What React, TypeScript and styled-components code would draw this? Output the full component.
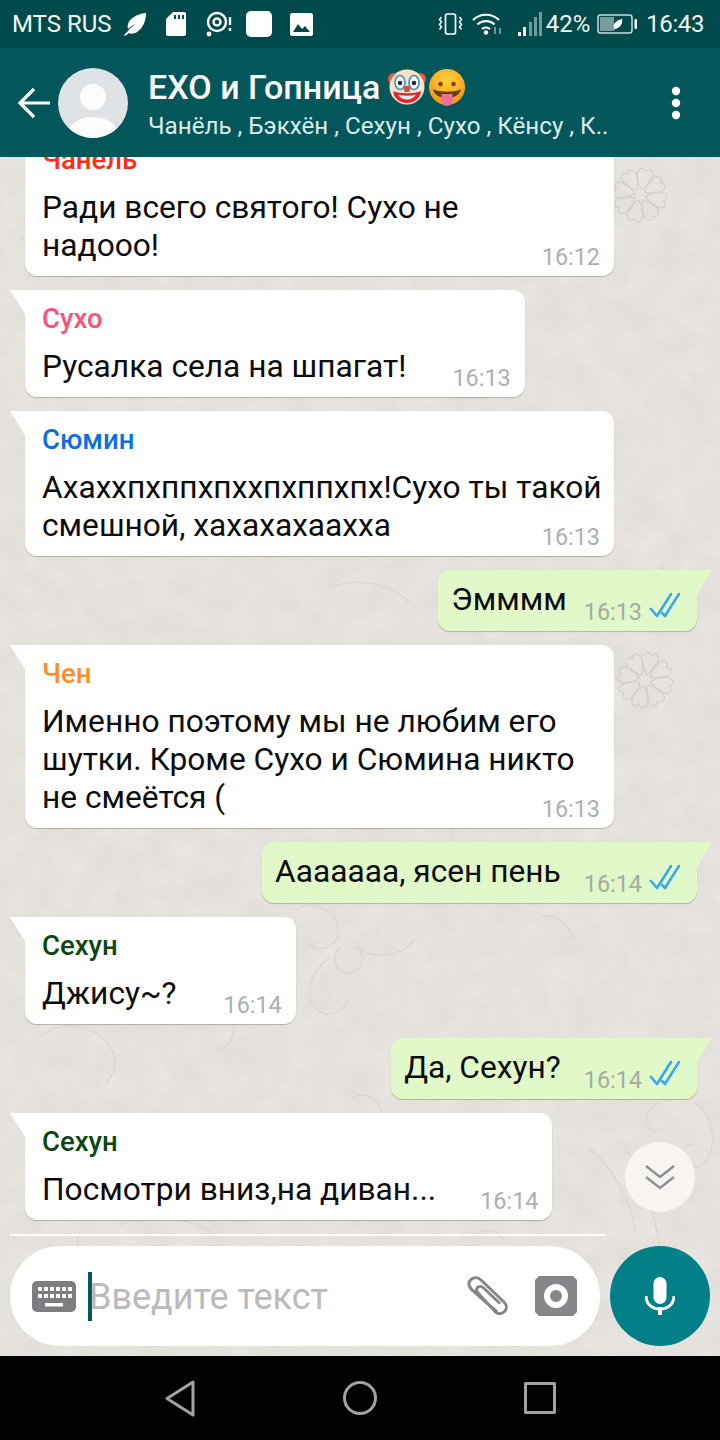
import React from "react";
import styled, { createGlobalStyle } from "styled-components";

const Global = createGlobalStyle`
  html, body { margin: 0; padding: 0; background: #000; }
  #root { width: 720px; height: 1440px; }
`;

const Phone = styled.div`
  width: 720px;
  height: 1440px;
  display: flex;
  flex-direction: column;
  overflow: hidden;
  font-family: Roboto, "Noto Sans", sans-serif;
`;

const StatusBar = styled.div`
  height: 48px;
  flex: none;
  background: #004a4c;
  color: #f2f7f7;
  display: flex;
  align-items: center;
  justify-content: space-between;
  padding: 0 16px 0 12px;
`;

const StatusGroup = styled.div`
  display: flex;
  align-items: center;
`;

const StatusText = styled.span<{ $ml?: number; $tight?: boolean }>`
  font-size: 24px;
  line-height: 48px;
  margin-left: ${(p) => p.$ml ?? 0}px;
  letter-spacing: ${(p) => (p.$tight ? "-0.4px" : "0")};
`;

const StatusIcon = styled.svg<{ $ml: number }>`
  flex: none;
  display: block;
  margin-left: ${(p) => p.$ml}px;
`;

const Header = styled.header`
  height: 109px;
  flex: none;
  background: #03565a;
  display: flex;
  align-items: center;
  padding: 0 0 0 18px;
  position: relative;
  z-index: 2;
  color: #fff;
`;

const BackIcon = styled.svg`
  flex: none;
  display: block;
`;

const Avatar = styled.svg`
  flex: none;
  display: block;
  margin-left: 8px;
`;

const HeaderText = styled.div`
  margin-left: 21px;
  width: 490px;
  flex: none;
  display: flex;
  flex-direction: column;
  padding-top: 5px;
`;

const TitleRow = styled.div`
  display: flex;
  align-items: center;
  height: 40px;
`;

const Title = styled.span`
  font-size: 34px;
  font-weight: 500;
  line-height: 40px;
  margin-left: -1px;
`;

const Emoji = styled.svg<{ $ml: number }>`
  flex: none;
  display: block;
  margin-left: ${(p) => p.$ml}px;
`;

const Subtitle = styled.div`
  font-size: 24.2px;
  line-height: 34px;
  margin-top: 2px;
  color: #dcebeb;
  white-space: nowrap;
  margin-left: -1px;
`;

const MenuDots = styled.svg`
  flex: none;
  display: block;
  margin-left: 32px;
`;

const Chat = styled.main`
  flex: 1;
  min-height: 0;
  position: relative;
  background: #e3dfdb;
  display: flex;
  flex-direction: column;
  overflow: hidden;
`;

const Wallpaper = styled.svg`
  position: absolute;
  inset: 0;
  display: block;
`;

const Messages = styled.div`
  position: relative;
  flex: 1;
  min-height: 0;
  display: flex;
  flex-direction: column;
  justify-content: flex-end;
  gap: 14px;
  padding: 0 23px 14px 25px;
`;

const Bubble = styled.div<{ $out?: boolean; $tail?: boolean; $wide?: boolean }>`
  flex: none;
  position: relative;
  display: flow-root;
  box-sizing: border-box;
  max-width: 589px;
  ${(p) => p.$wide && "width: 589px;"}
  align-self: ${(p) => (p.$out ? "flex-end" : "flex-start")};
  background: ${(p) => (p.$out ? "#e1f8c8" : "#fff")};
  color: #0c0c0c;
  border-radius: 12px;
  ${(p) => p.$tail && (p.$out ? "border-top-right-radius: 0;" : "border-top-left-radius: 0;")}
  padding: ${(p) => (p.$out ? "11px 17px 12px 13px" : "11px 10px 11px 17px")};
  box-shadow: 0 1px 1px rgba(90, 80, 70, 0.35);
  ${(p) =>
    p.$tail &&
    (p.$out
      ? `&::before { content: ""; position: absolute; top: 0; right: -15px; width: 15px; height: 25px; background: #e1f8c8; clip-path: polygon(0 0, 100% 0, 0 100%); }`
      : `&::before { content: ""; position: absolute; top: 0; left: -15px; width: 15px; height: 24px; background: #fff; clip-path: polygon(0 0, 100% 0, 100% 100%); }`)}
`;

const Sender = styled.div<{ $color: string }>`
  font-size: 27.5px;
  font-weight: 500;
  line-height: 36px;
  margin-bottom: 11px;
  color: ${(p) => p.$color};
`;

const Body = styled.span`
  font-size: 31.7px;
  line-height: 38px;
  white-space: pre-line;
`;

const Meta = styled.span<{ $gap: number; $out?: boolean }>`
  float: right;
  display: flex;
  align-items: flex-start;
  gap: 7px;
  margin: ${(p) => (p.$out ? 19 : 18)}px ${(p) => (p.$out ? 0 : 4)}px -20px ${(p) => p.$gap}px;
  height: 24px;
`;

const Time = styled.span<{ $out?: boolean }>`
  font-size: 23.4px;
  line-height: 24px;
  color: ${(p) => (p.$out ? "#a3aca0" : "#abafb2")};
`;

const Ticks = styled.svg`
  display: block;
  flex: none;
  margin-top: -8px;
`;

const ScrollDown = styled.div`
  position: absolute;
  right: 25px;
  bottom: 144px;
  width: 70px;
  height: 70px;
  border-radius: 50%;
  background: #f8f4f2;
  display: flex;
  align-items: center;
  justify-content: center;
`;

const Divider = styled.div`
  position: relative;
  height: 2px;
  width: 597px;
  margin: 0 0 10px 10px;
  background: #fff;
  flex: none;
`;

const Composer = styled.div`
  position: relative;
  flex: none;
  display: flex;
  gap: 10px;
  padding: 0 10px 10px;
`;

const InputPill = styled.div`
  width: 590px;
  height: 100px;
  box-sizing: border-box;
  background: #fff;
  border-radius: 50px;
  display: flex;
  align-items: center;
  padding: 0 23px 0 22px;
`;

const Caret = styled.div`
  width: 4px;
  height: 49px;
  background: #03565a;
  margin-left: 12px;
  flex: none;
`;

const Placeholder = styled.span`
  font-size: 36px;
  color: #bbbbbb;
  margin-left: -3px;
  flex: 1;
  line-height: 48px;
  padding-top: 2px;
`;

const PillIcon = styled.svg<{ $ml?: number }>`
  flex: none;
  display: block;
  margin-left: ${(p) => p.$ml ?? 0}px;
`;

const MicButton = styled.div`
  width: 100px;
  height: 100px;
  border-radius: 50%;
  background: #027f87;
  display: flex;
  align-items: center;
  justify-content: center;
`;

const NavRow = styled.nav`
  display: flex;
  width: 720px;
  height: 84px;
  align-items: center;
  justify-content: center;
  gap: 147px;
  background: #000;
  flex: none;
`;

type Msg = {
  name?: string;
  color?: string;
  text: string;
  time: string;
  out?: boolean;
  tail?: boolean;
  gap?: number;
  wide?: boolean;
};

const messages: Msg[] = [
  { name: "Чанёль", color: "#ff2a18", text: "Ради всего святого! Сухо не\nнадооо!", time: "16:12", wide: true },
  { name: "Сухо", color: "#f9527c", text: "Русалка села на шпагат!", time: "16:13", tail: true, gap: 46 },
  { name: "Сюмин", color: "#0a6fe4", text: "Ахаххпхппхпххпхппхпх!Сухо ты такой смешной, хахахахаахха", time: "16:13", tail: true, wide: true },
  { text: "Эмммм", time: "16:13", out: true, tail: true, gap: 17 },
  { name: "Чен", color: "#fd8f26", text: "Именно поэтому мы не любим его шутки. Кроме Сухо и Сюмина никто не смеётся (", time: "16:13", tail: true, wide: true },
  { text: "Ааааааа, ясен пень", time: "16:14", out: true, tail: true, gap: 23 },
  { name: "Сехун", color: "#0c4712", text: "Джису~?", time: "16:14", tail: true },
  { text: "Да, Сехун?", time: "16:14", out: true, tail: true, gap: 23 },
  { name: "Сехун", color: "#0c4712", text: "Посмотри вниз,на диван...", time: "16:14", tail: true, gap: 44 },
];

const Flower = ({ x, y, r }: { x: number; y: number; r: number }) => (
  <g transform={`translate(${x} ${y}) scale(${r / 30}) rotate(14)`} fill="none" stroke="#d3cec9" strokeWidth="1.2">
    {[0, 45, 90, 135, 180, 225, 270, 315].map((a) => (
      <path key={a} transform={`rotate(${a})`} d="M0-6C-4-10-10-18-8-25-6-30-2-29 0-26 2-29 6-30 8-25 10-18 4-10 0-6Z" />
    ))}
  </g>
);

const WallpaperArt = () => (
  <Wallpaper width="720" height="1199" viewBox="0 0 720 1199">
    <defs>
      <filter id="mottle" x="0" y="0" width="100%" height="100%">
        <feTurbulence type="fractalNoise" baseFrequency="0.035" numOctaves="4" seed="7" />
        <feColorMatrix values="0 0 0 0 0.97  0 0 0 0 0.96  0 0 0 0 0.94  1.2 0 0 0 -0.4" />
      </filter>
    </defs>
    <rect width="720" height="1199" filter="url(#mottle)" opacity="0.4" />
    <Flower x={645} y={523} r={29} />
    <Flower x={640} y={38} r={28} />
    <g fill="none" stroke="#d8d4cf" strokeWidth="1.1">
      <path d="M622 985c18 28 30 60 36 96 5 24 2 40-6 46M590 992c22 18 40 48 46 84M694 945c14 8 20 26 18 44 -2 16-12 24-22 20-12-6-8-24 4-22" />
      <path d="M660 945c-8 4-14 10-14 18 0 10 10 14 16 8" />
      <path d="M330 800c-16 12-24 30-18 46 8 16 28 14 36-2M355 790c20 14 50 8 60-8M180 860c18-22 42-20 52 0 6 14-2 30-16 34" />
      <path d="M40 880c16-14 44-16 64 2 14 14 14 32 2 44M300 1060c12-12 36-12 46 2M120 1068c24-12 60-10 90 6" />
      <path d="M300 750c22-6 40 8 38 26-2 14-18 20-28 12M470 640c-16 14-24 36-14 54M540 760c16-4 28 6 34 22" />
      <path d="M20 80c14 8 18 28 6 44M660 410c18 18 30 40 30 62M330 430c30-10 60-4 80 16M400 560c16 14 40 14 56 2" />
      <path d="M340 790c-10 10-4 26 8 26s18-12 12-22M352 940c14-6 28 2 30 16M80 1075c-6 8-2 18 6 20M480 1075c10-4 20 0 24 8" />
    </g>
  </Wallpaper>
);

const DoubleTick = () => (
  <Ticks width="31" height="26" viewBox="0 0 31 26" fill="none" stroke="#35a9ec" strokeWidth="2.6" strokeLinecap="round" strokeLinejoin="round">
    <path d="M2 17l6 7L22 2" />
    <path d="M13 21l3 3L30 2" />
  </Ticks>
);

const ClownEmoji = () => (
  <Emoji $ml={8} width="38" height="36" viewBox="0 0 38 36">
    <circle cx="6" cy="10" r="6" fill="#ee5a3c" />
    <circle cx="32" cy="10" r="6" fill="#ee5a3c" />
    <circle cx="19" cy="18" r="17.500" fill="#f9e2c8" />
    <ellipse cx="12" cy="13.500" rx="5" ry="7" fill="#fff" stroke="#3f8fd0" strokeWidth="1.700" />
    <ellipse cx="26" cy="13.500" rx="5" ry="7" fill="#fff" stroke="#3f8fd0" strokeWidth="1.700" />
    <circle cx="12" cy="14" r="2.300" fill="#2c2c2c" />
    <circle cx="26" cy="14" r="2.300" fill="#2c2c2c" />
    <path d="M5 22c5 3 23 3 28 0-1 8-7 12-14 12S6 30 5 22z" fill="#e4262b" />
    <path d="M10 25.500c4 1.500 14 1.500 18 0-2 3.500-5 5-9 5s-7-1.500-9-5z" fill="#fdf2e8" />
    <circle cx="19" cy="20" r="3.200" fill="#e8482f" />
  </Emoji>
);

const TongueEmoji = () => (
  <Emoji $ml={3} width="36" height="37" viewBox="0 0 36 37">
    <defs>
      <radialGradient id="face" cx="50%" cy="30%" r="70%">
        <stop offset="0%" stopColor="#ffd23f" />
        <stop offset="100%" stopColor="#f39414" />
      </radialGradient>
    </defs>
    <circle cx="18" cy="18" r="18" fill="url(#face)" />
    <circle cx="11.500" cy="15" r="2.300" fill="#7a4510" />
    <circle cx="24.500" cy="15" r="2.300" fill="#7a4510" />
    <path d="M4 20c4 3.500 24 3.500 28 0-1 6-7 9-14 9s-13-3-14-9z" fill="#6b3a10" />
    <path d="M12.500 25h11v7a5.500 5 0 0 1-11 0z" fill="#ec6f9a" />
  </Emoji>
);

export default function App() {
  return (
    <Phone>
      <Global />
      <StatusBar>
        <StatusGroup>
          <StatusText>MTS RUS</StatusText>
          <StatusIcon $ml={11} width="24" height="26" viewBox="0 0 24 26" fill="#fff">
            <path d="M23 2c0 8-3 15-9 19-3 2-6 2-8 1l-4 3-1-1 4-4c2-3 5-5 8-7-3 1-6 3-8 5C3 9 13 3 23 2z" />
          </StatusIcon>
          <StatusIcon $ml={18} width="22" height="26" viewBox="0 0 22 26" fill="#fff">
            <path d="M8 1h11a2 2 0 0 1 2 2v20a2 2 0 0 1-2 2H3a2 2 0 0 1-2-2V8z" />
            <path d="M9 4h2v4H9zM13 4h2v4h-2zM17 4h2v4h-2z" fill="#004a4c" />
          </StatusIcon>
          <StatusIcon $ml={19} width="26" height="26" viewBox="0 0 26 26" fill="none" stroke="#fff">
            <circle cx="11" cy="11" r="9" strokeWidth="2.400" />
            <circle cx="11" cy="11" r="3.500" strokeWidth="2.400" />
            <circle cx="3" cy="23" r="2.400" fill="#fff" stroke="none" />
            <path d="M24 6v8M24 17v3" strokeWidth="2.400" />
          </StatusIcon>
          <StatusIcon $ml={14} width="26" height="26" viewBox="0 0 26 26" fill="#fff">
            <rect width="26" height="26" rx="5" />
          </StatusIcon>
          <StatusIcon $ml={18} width="23" height="23" viewBox="0 0 23 23">
            <rect width="23" height="23" rx="2.500" fill="#fff" />
            <path d="M3 19l5-8 4 5 3-3 5 6z" fill="#004a4c" />
          </StatusIcon>
        </StatusGroup>
        <StatusGroup>
          <StatusIcon $ml={0} width="25" height="22" viewBox="0 0 25 22" fill="none" stroke="#fff" strokeWidth="1.700">
            <rect x="7.500" y="1" width="10" height="20" rx="2" />
            <path d="M3.500 4l-2 2.500 2 2.500-2 2.500 2 2.500-2 2.500M21.500 4l2 2.500-2 2.500 2 2.500-2 2.500 2 2.500" strokeWidth="1.500" />
          </StatusIcon>
          <StatusIcon $ml={9} width="30" height="22" viewBox="0 0 30 22" fill="none" stroke="#fff" strokeWidth="2.200">
            <path d="M1 7c7-7 19-7 26 0M5.500 11.500c4.500-4.500 12.500-4.500 17 0M10 16c2-2 6-2 8 0" />
            <circle cx="14" cy="19.500" r="2.200" fill="#fff" stroke="none" />
            <path d="M23 14v7M28 15v6" strokeWidth="1.300" stroke="#a9c4c4" />
          </StatusIcon>
          <StatusIcon $ml={16} width="24" height="24" viewBox="0 0 24 24">
            <rect x="0" y="20" width="3" height="4" fill="#fff" />
            <rect x="5" y="15" width="3" height="9" fill="#fff" />
            <rect x="11" y="10" width="3" height="14" fill="#6f9a9a" />
            <rect x="16" y="5" width="3" height="19" fill="#6f9a9a" />
            <rect x="21" y="0" width="3" height="24" fill="#6f9a9a" />
          </StatusIcon>
          <StatusText $ml={4}>42%</StatusText>
          <StatusIcon $ml={7} width="40" height="20" viewBox="0 0 40 20">
            <rect x="1" y="1" width="34" height="18" rx="2.500" fill="none" stroke="#c9dcdc" strokeWidth="1.500" />
            <rect x="3" y="3" width="14" height="14" fill="#7a9b9b" />
            <rect x="37.500" y="5" width="2.500" height="10" rx="1" fill="#fff" />
            <path d="M25 5c1 5-2 9-7 10l-1 1 0-2c-1-5 3-8 8-9z" fill="#fff" />
          </StatusIcon>
          <StatusText $ml={9} $tight>16:43</StatusText>
        </StatusGroup>
      </StatusBar>

      <Header>
        <BackIcon width="32" height="32" viewBox="0 0 32 32" fill="none" stroke="#fff" strokeWidth="3.200">
          <path d="M32 16H3M16 2L2 16l14 14" />
        </BackIcon>
        <Avatar width="70" height="70" viewBox="0 0 70 70">
          <defs>
            <clipPath id="avatarClip"><circle cx="35" cy="35" r="35" /></clipPath>
          </defs>
          <circle cx="35" cy="35" r="35" fill="#dfe3e6" />
          <g clipPath="url(#avatarClip)" fill="#fcfcfc">
            <circle cx="35" cy="29" r="13" />
            <ellipse cx="35" cy="66" rx="25" ry="17" />
          </g>
        </Avatar>
        <HeaderText>
          <TitleRow>
            <Title>EXO и Гопница</Title>
            <ClownEmoji />
            <TongueEmoji />
          </TitleRow>
          <Subtitle>Чанёль , Бэкхён , Сехун , Сухо , Кёнсу , К..</Subtitle>
        </HeaderText>
        <MenuDots width="10" height="34" viewBox="0 0 10 34" fill="#fff">
          <circle cx="5" cy="5" r="4.200" />
          <circle cx="5" cy="17" r="4.200" />
          <circle cx="5" cy="29" r="4.200" />
        </MenuDots>
      </Header>

      <Chat>
        <WallpaperArt />
        <Messages>
          {messages.map((m, i) => (
            <Bubble key={i} $out={m.out} $tail={m.tail} $wide={m.wide}>
              {m.name && <Sender $color={m.color!}>{m.name}</Sender>}
              <Body>{m.text}</Body>
              <Meta $gap={m.gap ?? 47} $out={m.out}>
                <Time $out={m.out}>{m.time}</Time>
                {m.out && <DoubleTick />}
              </Meta>
            </Bubble>
          ))}
        </Messages>
        <ScrollDown>
          <svg width="32" height="26" viewBox="0 0 32 26" fill="none" stroke="#8f8f8f" strokeWidth="2.400">
            <path d="M2 2l14 11L30 2M2 13l14 11 14-11" />
          </svg>
        </ScrollDown>
        <Divider />
        <Composer>
          <InputPill>
            <PillIcon width="44" height="31" viewBox="0 0 44 31">
              <rect width="44" height="31" rx="5" fill="#7d7d82" />
              <g fill="#fff">
                {[7, 13, 19, 25, 31, 37].map((x) => (
                  <rect key={x} x={x - 1} y="6" width="4" height="4" />
                ))}
                {[7, 13, 19, 25, 31, 37].map((x) => (
                  <rect key={x} x={x - 1} y="13" width="4" height="4" />
                ))}
                <rect x="13" y="22" width="18" height="3.500" />
              </g>
            </PillIcon>
            <Caret />
            <Placeholder>Введите текст</Placeholder>
            <PillIcon width="44" height="40" viewBox="0 0 44 40" fill="none" stroke="#85858a" strokeWidth="3">
              <path d="M31 36L6 14C2 10 2 6 5 3.500S12 1 15 4l23 22c3 3 3 7 .5 9.500s-6 3-9 .5L12 17c-2-2-2-4-.5-5.500s4-1.500 5.500 0l17 16" />
            </PillIcon>
            <PillIcon $ml={25} width="42" height="40" viewBox="0 0 42 40">
              <path d="M4 0h34l4 4v32l-4 4H4l-4-4V4z" fill="#85858a" />
              <circle cx="21" cy="20" r="9" fill="#85858a" stroke="#fff" strokeWidth="6" />
            </PillIcon>
          </InputPill>
          <MicButton>
            <svg width="30" height="38" viewBox="0 0 30 38" fill="#fff">
              <rect x="8.500" y="0" width="13" height="27" rx="6.500" />
              <path d="M1 19c0 8 6 13 14 13s14-5 14-13" fill="none" stroke="#fff" strokeWidth="3" />
              <rect x="13" y="30" width="4" height="8" />
            </svg>
          </MicButton>
        </Composer>
      </Chat>

      <NavRow>
        <svg width="32" height="37" viewBox="0 0 32 37" fill="none" stroke="#a2a2a2" strokeWidth="3" strokeLinejoin="round">
          <path d="M29 2v33L3 18.500z" />
        </svg>
        <svg width="34" height="34" viewBox="0 0 34 34" fill="none" stroke="#a2a2a2" strokeWidth="3">
          <circle cx="17" cy="17" r="15.500" />
        </svg>
        <svg width="32" height="32" viewBox="0 0 32 32" fill="none" stroke="#a2a2a2" strokeWidth="3" strokeLinejoin="round">
          <rect x="1.500" y="1.500" width="29" height="29" />
        </svg>
      </NavRow>
    </Phone>
  );
}
